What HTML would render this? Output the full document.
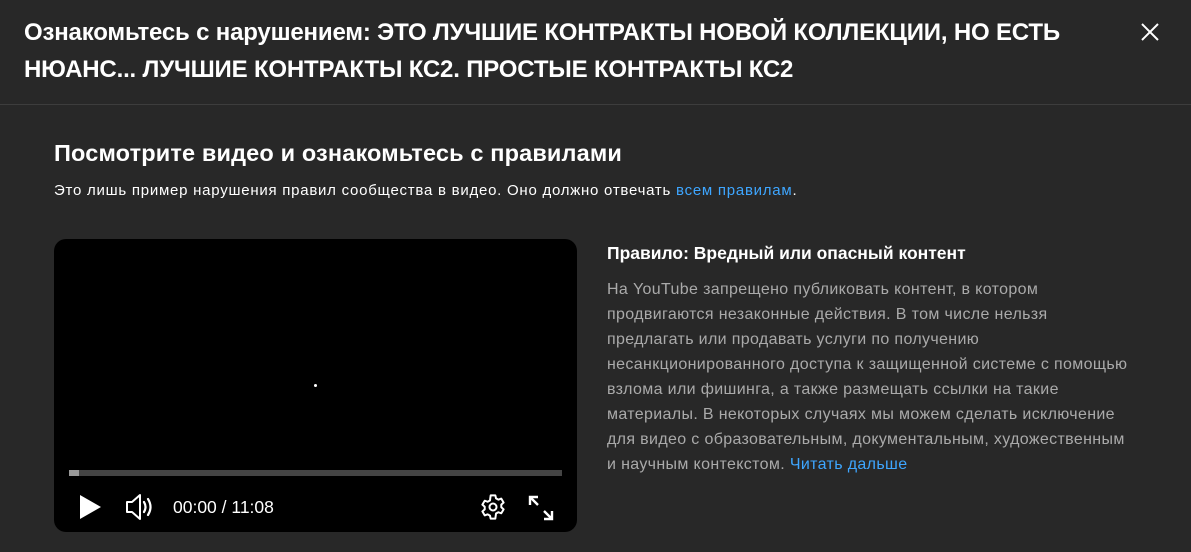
<!DOCTYPE html>
<html><head><meta charset="utf-8"><style>
*{margin:0;padding:0;box-sizing:border-box}
body{width:1191px;height:552px;background:#282828;font-family:"Liberation Sans",sans-serif;color:#fff;overflow:hidden;position:relative}
.h{position:absolute;left:24px;top:14px;font-size:24px;font-weight:bold;line-height:37px;letter-spacing:-0.18px;width:1100px;white-space:nowrap}
.x{position:absolute;left:1140px;top:22px}
.div{position:absolute;left:0;top:104px;width:1191px;height:1px;background:#3d3d3d}
.t2{position:absolute;left:54px;top:140px;font-size:23.5px;font-weight:bold;letter-spacing:0.15px}
.p{position:absolute;left:54px;top:182px;font-size:15px;letter-spacing:0.75px;white-space:nowrap}
a{color:#3ea6ff;text-decoration:none}
.v{position:absolute;left:54px;top:239px;width:523px;height:293px;background:#000;border-radius:12px}
.r1{position:absolute;left:607px;top:243px;font-size:17.5px;font-weight:bold}
.r2{position:absolute;left:607px;top:277px;width:600px;font-size:16px;line-height:25px;color:#aaa;white-space:nowrap;letter-spacing:0.35px}
</style></head><body>
<div class="h">Ознакомьтесь с нарушением: ЭТО ЛУЧШИЕ КОНТРАКТЫ НОВОЙ КОЛЛЕКЦИИ, НО ЕСТЬ<br>НЮАНС... ЛУЧШИЕ КОНТРАКТЫ КС2. ПРОСТЫЕ КОНТРАКТЫ КС2</div>
<svg class="x" width="20" height="20" viewBox="0 0 20 20"><path d="M2 2L18 18M18 2L2 18" stroke="#fff" stroke-width="2"/></svg>
<div class="div"></div>
<div class="t2">Посмотрите видео и ознакомьтесь с правилами</div>
<div class="p">Это лишь пример нарушения правил сообщества в видео. Оно должно отвечать <a>всем правилам</a>.</div>
<div class="v">
<div style="position:absolute;left:260px;top:145px;width:3px;height:3px;background:#fff;border-radius:50%"></div>
<div style="position:absolute;left:15px;top:231px;width:493px;height:6px;background:#444"></div>
<div style="position:absolute;left:15px;top:231px;width:10px;height:6px;background:#999"></div>
<svg style="position:absolute;left:26px;top:256px" width="22" height="24" viewBox="0 0 22 24"><path d="M0 0L21 12L0 24Z" fill="#fff"/></svg>
<svg style="position:absolute;left:71px;top:253px" width="30" height="30" viewBox="0 0 30 30"><path d="M2 10h5l8-7v24l-8-7H2z" fill="none" stroke="#fff" stroke-width="2" stroke-linejoin="round"/><path d="M19 10q3 5 0 10M23 7q5 8 0 16" fill="none" stroke="#fff" stroke-width="2.2" stroke-linecap="round"/></svg>
<div style="position:absolute;left:119px;top:258px;font-size:17.5px">00:00 / 11:08</div>
<svg style="position:absolute;left:425px;top:254px" width="28" height="28" viewBox="0 0 24 24"><path d="M10 2h4l.6 2.6 2 1.1 2.5-.9 2 3.4-2 1.8v2.2l2 1.8-2 3.4-2.5-.9-2 1.1L14 22h-4l-.6-2.6-2-1.1-2.5.9-2-3.4 2-1.8V11.8l-2-1.8 2-3.4 2.5.9 2-1.1z" fill="none" stroke="#fff" stroke-width="1.7" stroke-linejoin="round"/><circle cx="12" cy="12" r="3" fill="none" stroke="#fff" stroke-width="1.7"/></svg>
<svg style="position:absolute;left:474px;top:256px" width="26" height="26" viewBox="0 0 26 26"><path d="M2 10V2h8M2 2l8 8M24 16v8h-8M24 24l-8-8" fill="none" stroke="#fff" stroke-width="2.4"/></svg>
</div>
<div class="r1">Правило: Вредный или опасный контент</div>
<div class="r2">На YouTube запрещено публиковать контент, в котором<br>продвигаются незаконные действия. В том числе нельзя<br>предлагать или продавать услуги по получению<br>несанкционированного доступа к защищенной системе с помощью<br>взлома или фишинга, а также размещать ссылки на такие<br>материалы. В некоторых случаях мы можем сделать исключение<br>для видео с образовательным, документальным, художественным<br>и научным контекстом. <a>Читать дальше</a></div>
</body></html>
